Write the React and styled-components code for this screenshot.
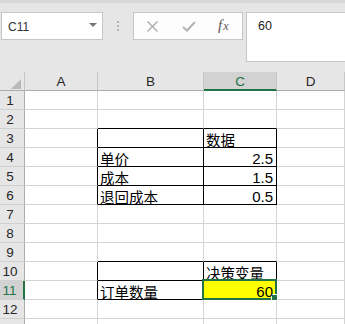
import React from "react";
import styled, { createGlobalStyle } from "styled-components";

const GlobalStyle = createGlobalStyle`
  html, body { margin: 0; padding: 0; background: #ffffff; overflow: hidden; }
  body { font-family: "Liberation Sans", Arial, sans-serif; }
`;

const Page = styled.div`
  width: 345px;
  height: 324px;
  overflow: hidden;
  background: #ffffff;
`;

const TopStrip = styled.div`
  height: 3px;
  background: #d8d8d8;
`;

const Toolbar = styled.div`
  display: flex;
  align-items: flex-start;
  height: 69px;
  box-sizing: border-box;
  padding: 9px 0 0 1px;
  background: #e6e6e6;
`;

const NameBox = styled.div`
  width: 102px;
  height: 28px;
  box-sizing: border-box;
  border: 1px solid #c6c6c6;
  background: #ffffff;
  display: flex;
  align-items: center;
  justify-content: space-between;
  padding: 0 5px 0 6px;
`;

const NameText = styled.span`
  font-size: 12px;
  color: #333333;
  padding-top: 1px;
`;

const Caret = styled.span`
  width: 0;
  height: 0;
  border-left: 4px solid transparent;
  border-right: 4px solid transparent;
  border-top: 4px solid #767676;
  margin-top: -2px;
`;

const Grip = styled.div`
  display: flex;
  flex-direction: column;
  gap: 2px;
  margin: 9px 0 0 14px;
`;

const Dot = styled.span`
  width: 2px;
  height: 2px;
  background: #b4b4b4;
`;

const FxBox = styled.div`
  width: 110px;
  height: 28px;
  box-sizing: border-box;
  margin-left: 14px;
  border: 1px solid #c6c6c6;
  background: #fdfdfd;
  display: flex;
  align-items: center;
  padding-left: 13px;
`;

const IconSlot = styled.span`
  display: flex;
  align-items: center;
  margin-right: ${(p) => p.$gap}px;
`;

const Fx = styled.span`
  font-family: "Liberation Serif", "Times New Roman", serif;
  font-style: italic;
  color: #555555;
  font-size: 15px;
  display: flex;
  align-items: baseline;
  margin-top: -2px;
`;

const FxSmall = styled.span`
  font-size: 12px;
  margin-left: 1px;
`;

const FormulaInput = styled.div`
  flex: 1;
  height: 50px;
  box-sizing: border-box;
  margin: 0 -3px 0 3px;
  border: 1px solid #c6c6c6;
  background: #ffffff;
  padding: 6px 0 0 11px;
  font-size: 12.5px;
  color: #222222;
`;

const Sheet = styled.div`
  display: grid;
  grid-template-columns: 25px 73px 106px 73px 1fr;
  grid-auto-rows: 19px;
`;

const Corner = styled.div`
  position: relative;
  background: #e6e6e6;
  box-sizing: border-box;
  border-right: 1px solid #c6c6c6;
  border-bottom: 1px solid #ababab;
`;

const CornerTriangle = styled.svg`
  position: absolute;
  right: 3px;
  bottom: 1px;
`;

const ColHeader = styled.div`
  box-sizing: border-box;
  background: ${(p) => (p.$selected ? "#d2d2d2" : "#e6e6e6")};
  border-right: 1px solid #c6c6c6;
  border-bottom: ${(p) => (p.$selected ? "2px solid #217346" : "1px solid #ababab")};
  display: flex;
  align-items: center;
  justify-content: center;
  font-size: 13.5px;
  color: ${(p) => (p.$selected ? "#217346" : "#262626")};
  padding-top: ${(p) => (p.$selected ? "2px" : "1px")};
`;

const RowHeader = styled.div`
  box-sizing: border-box;
  background: ${(p) => (p.$selected ? "#d2d2d2" : "#e6e6e6")};
  border-right: ${(p) => (p.$selected ? "2px solid #217346" : "1px solid #ababab")};
  border-bottom: 1px solid #d0d0d0;
  display: flex;
  align-items: center;
  justify-content: center;
  padding-right: 4px;
  font-size: 13.5px;
  color: ${(p) => (p.$selected ? "#217346" : "#262626")};
`;

const Cell = styled.div`
  position: relative;
  box-sizing: border-box;
  background: ${(p) => p.$bg || "#ffffff"};
  border-right: 1px solid ${(p) => (p.$right ? "#000000" : "#d4d4d4")};
  border-bottom: 1px solid ${(p) => (p.$bottom ? "#000000" : "#d4d4d4")};
  display: flex;
  align-items: flex-end;
  justify-content: ${(p) => (p.$num ? "flex-end" : "flex-start")};
  padding: 0 3px 0 2px;
  white-space: nowrap;
  color: #000000;
  z-index: ${(p) => (p.$active ? 2 : "auto")};
`;

const CjkText = styled.span`
  font-family: "Noto Sans CJK SC", "Noto Sans", sans-serif;
  font-size: 14.5px;
  line-height: 15px;
  position: relative;
  z-index: 1;
`;

const NumText = styled.span`
  font-family: "Liberation Sans Narrow", "Liberation Sans", Arial, sans-serif;
  font-size: 15px;
  line-height: 14px;
  position: relative;
  z-index: 1;
`;

const Selection = styled.div`
  position: absolute;
  left: -2px;
  top: -2px;
  right: -1px;
  bottom: -1px;
  border: 2px solid #217346;
  pointer-events: none;
`;

const FillHandle = styled.div`
  position: absolute;
  right: -3px;
  bottom: -3px;
  width: 5px;
  height: 5px;
  background: #217346;
  border: 1px solid #ffffff;
`;

const COLS = ["A", "B", "C", "D"];

const DATA = {
  3: { C: { t: "数据" } },
  4: { B: { t: "单价" }, C: { t: "2.5", num: true } },
  5: { B: { t: "成本" }, C: { t: "1.5", num: true } },
  6: { B: { t: "退回成本" }, C: { t: "0.5", num: true } },
  10: { C: { t: "决策变量" } },
  11: { B: { t: "订单数量" }, C: { t: "60", num: true, bg: "#ffff00", active: true } },
};

const RANGES = [
  { r1: 3, r2: 6, c1: 2, c2: 3 },
  { r1: 10, r2: 11, c1: 2, c2: 3 },
];

const rightBlack = (r, c) =>
  RANGES.some((g) => r >= g.r1 && r <= g.r2 && c >= g.c1 - 1 && c <= g.c2);
const bottomBlack = (r, c) =>
  RANGES.some((g) => c >= g.c1 && c <= g.c2 && r >= g.r1 - 1 && r <= g.r2);

const ROWS = Array.from({ length: 13 }, (_, i) => i + 1);
const LAST_LABELED = 12;

export default function App() {
  return (
    <Page>
      <GlobalStyle />
      <TopStrip />
      <Toolbar>
        <NameBox>
          <NameText>C11</NameText>
          <Caret />
        </NameBox>
        <Grip>
          <Dot />
          <Dot />
          <Dot />
        </Grip>
        <FxBox>
          <IconSlot $gap={24}>
            <svg width="11" height="11" viewBox="0 0 11 11">
              <path d="M0.5 0.5 L10.5 10.5 M10.5 0.5 L0.5 10.5" stroke="#a8a8a8" strokeWidth="1.3" fill="none" />
            </svg>
          </IconSlot>
          <IconSlot $gap={22}>
            <svg width="14" height="11" viewBox="0 0 14 11">
              <path d="M1 6 L5 9.5 L13 1" stroke="#b4b4b4" strokeWidth="2" fill="none" />
            </svg>
          </IconSlot>
          <Fx>
            f<FxSmall>x</FxSmall>
          </Fx>
        </FxBox>
        <FormulaInput>60</FormulaInput>
      </Toolbar>
      <Sheet>
        <Corner>
          <CornerTriangle width="10" height="10" viewBox="0 0 10 10">
            <polygon points="10,0 10,10 0,10" fill="#b9b9b9" />
          </CornerTriangle>
        </Corner>
        {COLS.map((c) => (
          <ColHeader key={c} $selected={c === "C"}>
            {c}
          </ColHeader>
        ))}
        {ROWS.map((r) => (
          <React.Fragment key={r}>
            <RowHeader $selected={r === 11}>{r <= LAST_LABELED ? r : null}</RowHeader>
            {COLS.map((c, ci) => {
              const d = (DATA[r] || {})[c];
              const idx = ci + 1;
              return (
                <Cell
                  key={c}
                  $right={rightBlack(r, idx)}
                  $bottom={bottomBlack(r, idx)}
                  $num={d && d.num}
                  $bg={d && d.bg}
                  $active={d && d.active}
                >
                  {d && (d.num ? <NumText>{d.t}</NumText> : <CjkText>{d.t}</CjkText>)}
                  {d && d.active && (
                    <Selection>
                      <FillHandle />
                    </Selection>
                  )}
                </Cell>
              );
            })}
          </React.Fragment>
        ))}
      </Sheet>
    </Page>
  );
}
